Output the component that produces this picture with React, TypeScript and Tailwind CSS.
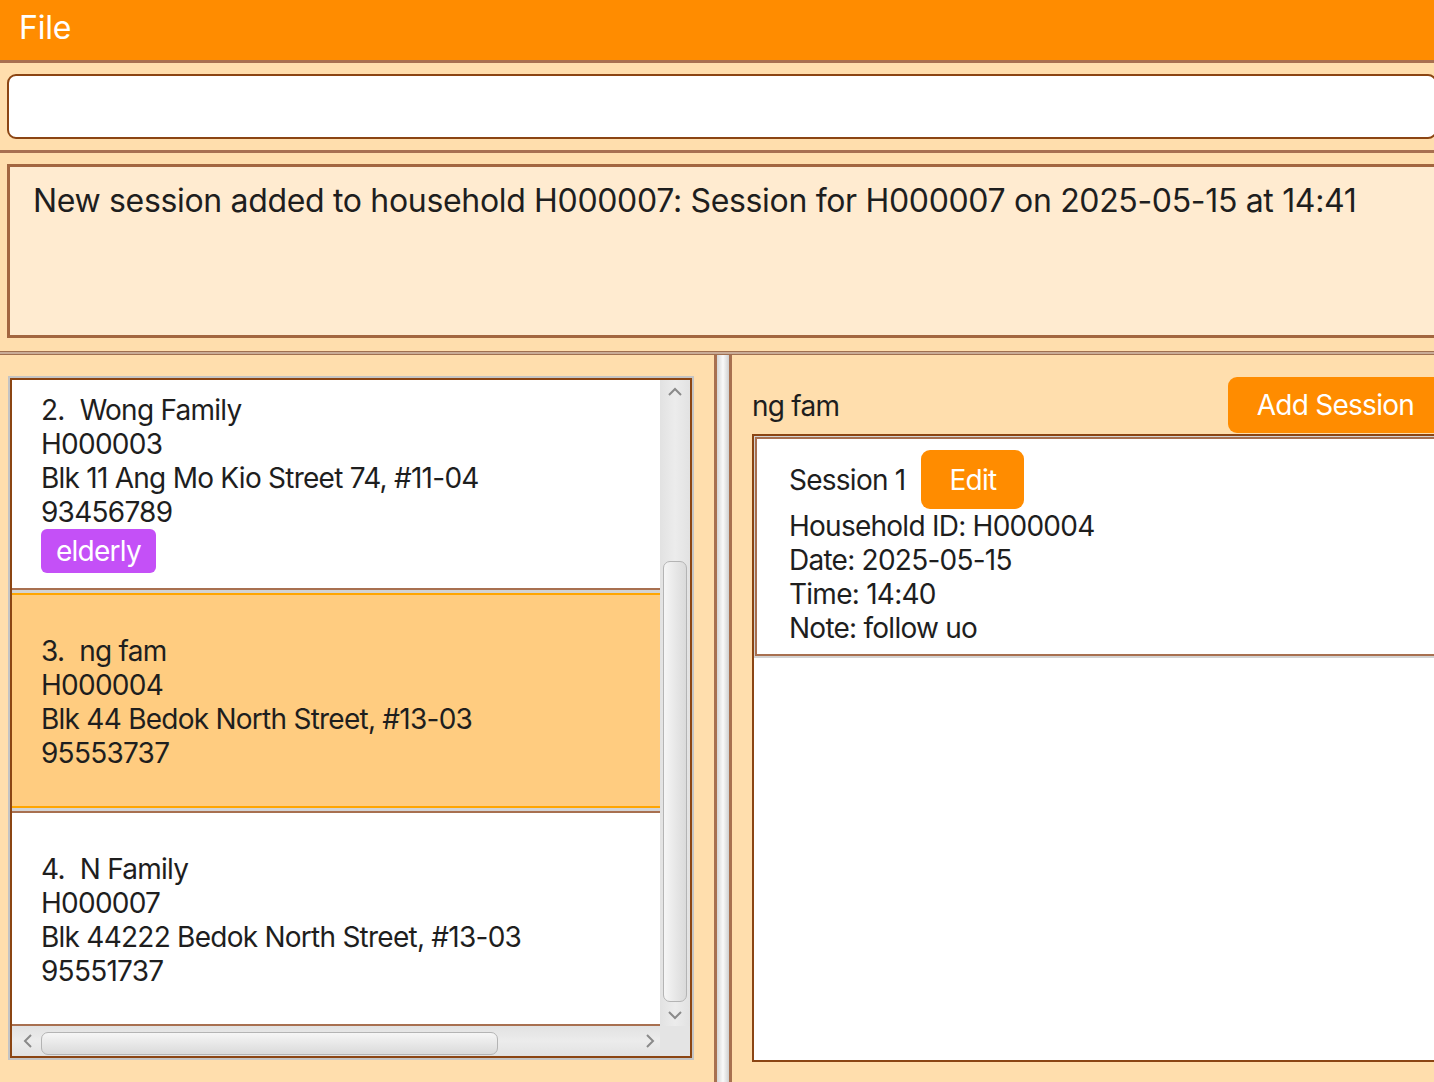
import React from "react";

const font = { fontFamily: "Inter, 'Open Sans', 'Liberation Sans', sans-serif" };

function ChevronUp() {
  return (
    <svg width="16" height="10" viewBox="0 0 16 10">
      <polyline points="2,8 8,2 14,8" fill="none" stroke="#8a8a8a" strokeWidth="2" />
    </svg>
  );
}
function ChevronDown() {
  return (
    <svg width="16" height="10" viewBox="0 0 16 10">
      <polyline points="2,2 8,8 14,2" fill="none" stroke="#8a8a8a" strokeWidth="2" />
    </svg>
  );
}
function ChevronLeft() {
  return (
    <svg width="10" height="16" viewBox="0 0 10 16">
      <polyline points="8,2 2,8 8,14" fill="none" stroke="#8a8a8a" strokeWidth="2" />
    </svg>
  );
}
function ChevronRight() {
  return (
    <svg width="10" height="16" viewBox="0 0 10 16">
      <polyline points="2,2 8,8 2,14" fill="none" stroke="#8a8a8a" strokeWidth="2" />
    </svg>
  );
}

function Line({ children }: { children: React.ReactNode }) {
  return <div className="h-[34px] leading-[34px] whitespace-nowrap">{children}</div>;
}

function Title({ n, name }: { n: string; name: string }) {
  return (
    <div className="h-[34px] leading-[34px] whitespace-nowrap flex gap-[15px]">
      <span>{n}</span>
      <span>{name}</span>
    </div>
  );
}

export default function App() {
  return (
    <div
      className="w-[1434px] h-[1082px] overflow-hidden bg-[#ffdead] text-[#1e1e1e] tracking-[-0.75px]"
      style={font}
    >
      <div className="w-[1446px] h-full flex flex-col">
        {/* Menu bar */}
        <div className="h-[60px] bg-[#ff8c00] flex items-center pl-[19px] pb-[5px] shrink-0">
          <span className="text-white text-[32px] leading-none tracking-[-0.2px]">File</span>
        </div>
        <div className="h-[3px] bg-[#a87050] shrink-0" />

        {/* Command box */}
        <div className="pt-[11px] pb-[11px] pl-[7px] shrink-0">
          <div className="h-[65px] bg-white border-2 border-[#8b4513] rounded-[9px] w-[1430px]" />
        </div>
        <div className="h-[3px] bg-[#a87050] shrink-0" />

        {/* Result display */}
        <div className="pt-[11px] pb-[13px] pl-[7px] shrink-0">
          <div className="h-[174px] bg-[#ffebd0] border-[3px] border-[#a3663f] pl-[23px] pt-[14px]">
            <div className="text-[32px] leading-[40px] whitespace-nowrap tracking-[-0.33px]">
              New session added to household H000007: Session for H000007 on 2025-05-15 at 14:41
            </div>
          </div>
        </div>
        <div className="h-[4px] border-y border-[#a07050] bg-[#c9ac98] shrink-0" />

        {/* Panels */}
        <div className="flex-1 flex min-h-0">
          {/* Left pane */}
          <div className="w-[714px] shrink-0 pt-[21px] pl-[8px] pr-[20px] pb-[22px]">
            <div className="h-full border-2 border-[#c4c4c4]">
              <div className="h-full border-2 border-[#8b4513] grid grid-cols-[648px_30px] grid-rows-[646px_30px]">
                {/* Cells */}
                <div className="bg-[#d3d3d3] flex flex-col gap-[3px] overflow-hidden text-[28px]">
                  <div className="bg-white border-b-2 border-[#a87050] pl-[29px] pt-[13px] pb-[15px] shrink-0">
                    <Title n="2." name="Wong Family" />
                    <Line>H000003</Line>
                    <Line>Blk 11 Ang Mo Kio Street 74, #11-04</Line>
                    <Line>93456789</Line>
                    <div className="flex">
                      <div className="h-[44px] bg-[#c450f7] text-white rounded-[6px] px-[15px] leading-[44px]">
                        elderly
                      </div>
                    </div>
                  </div>
                  <div className="bg-[#ffcc80] border-y-2 border-[#ffa500] pl-[29px] pt-[39px] pb-[36px] shrink-0">
                    <Title n="3." name="ng fam" />
                    <Line>H000004</Line>
                    <Line>Blk 44 Bedok North Street, #13-03</Line>
                    <Line>95553737</Line>
                  </div>
                  <div className="bg-white border-y-2 border-[#a87050] pl-[29px] pt-[39px] pb-[36px] shrink-0">
                    <Title n="4." name="N Family" />
                    <Line>H000007</Line>
                    <Line>Blk 44222 Bedok North Street, #13-03</Line>
                    <Line>95551737</Line>
                  </div>
                </div>
                {/* Vertical scrollbar */}
                <div className="bg-gradient-to-r from-[#e2e2e2] via-[#ececec] to-[#e2e2e2] flex flex-col items-center">
                  <div className="h-[22px] flex items-center justify-center pt-[2px]">
                    <ChevronUp />
                  </div>
                  <div className="mt-[159px] h-[441px] w-[24px] rounded-[7px] border border-[#b4b4b4] bg-gradient-to-r from-[#f6f6f6] to-[#dadada]" />
                  <div className="flex-1 flex items-center justify-center pt-[2px]">
                    <ChevronDown />
                  </div>
                </div>
                {/* Horizontal scrollbar */}
                <div className="bg-gradient-to-b from-[#e2e2e2] via-[#ececec] to-[#e2e2e2] flex items-center">
                  <div className="w-[28px] flex justify-center pl-[4px]">
                    <ChevronLeft />
                  </div>
                  <div className="ml-[1px] h-[23px] mt-[5px] w-[457px] rounded-[7px] border border-[#b4b4b4] bg-gradient-to-b from-[#f6f6f6] to-[#dadada]" />
                  <div className="flex-1 flex justify-end pr-[5px]">
                    <ChevronRight />
                  </div>
                </div>
                <div className="bg-[#e4e4e4]" />
              </div>
            </div>
          </div>

          {/* Divider */}
          <div className="w-[18px] shrink-0 border-x-[3px] border-[#a87050] bg-gradient-to-r from-[#d6d6d6] via-[#fafafa] to-[#d0d0d0]" />

          {/* Right pane */}
          <div className="flex-1 pt-[22px] pl-[20px] pb-[20px] flex flex-col min-w-0">
            <div className="flex items-center justify-between h-[56px] shrink-0">
              <span className="text-[28px] leading-[34px] pt-[2px]">ng fam</span>
              <div className="h-[56px] bg-[#ff8c00] rounded-[9px] text-white text-[28px] leading-[56px] pl-[29px] pr-[32px] whitespace-nowrap">
                Add Session
              </div>
            </div>
            <div className="mt-px flex-1 border-2 border-[#8b4513] bg-white">
              <div className="bg-[#d3d3d3] pt-px pl-px pb-[2px]">
                <div className="bg-white border-2 border-[#a87050] pl-[32px] pt-[11px] pb-[9px] text-[28px]">
                  <div className="flex items-center h-[59px]">
                    <span className="leading-[34px] whitespace-nowrap">Session 1</span>
                    <div className="ml-[16px] h-[59px] w-[103px] bg-[#ff8c00] rounded-[9px] text-white flex items-center justify-center">
                      Edit
                    </div>
                  </div>
                  <Line>Household ID: H000004</Line>
                  <Line>Date: 2025-05-15</Line>
                  <Line>Time: 14:40</Line>
                  <Line>Note: follow uo</Line>
                </div>
              </div>
            </div>
          </div>
        </div>
      </div>
    </div>
  );
}
